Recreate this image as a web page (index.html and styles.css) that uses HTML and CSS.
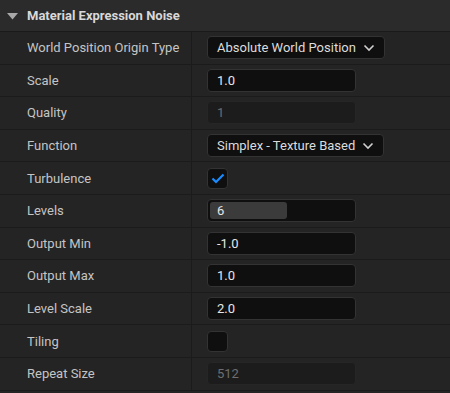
FILE: index.html
```html
<!DOCTYPE html>
<html lang="en">
<head>
  <meta charset="UTF-8">
  <title>Material Expression Noise</title>
  <link rel="stylesheet" href="styles.css">
</head>
<body>

  <div class="panel">
    <div class="header">
      <svg class="arrow" width="11" height="7" viewBox="0 0 11 7"><path d="M0 0 H11 L5.5 6.5 Z" fill="#a8a8a8"/></svg>
      <span>Material Expression Noise</span>
    </div>

    <div class="row">
      <div class="name">World Position Origin Type</div>
      <div class="value">
        <div class="combo">Absolute World Position
          <svg width="12" height="8" viewBox="0 0 12 8"><path d="M1.5 1.5 L6 6 L10.5 1.5" fill="none" stroke="#d0d0d0" stroke-width="1.6"/></svg>
        </div>
      </div>
    </div>

    <div class="row">
      <div class="name">Scale</div>
      <div class="value"><div class="field">1.0</div></div>
    </div>

    <div class="row">
      <div class="name">Quality</div>
      <div class="value"><div class="field disabled">1</div></div>
    </div>

    <div class="row">
      <div class="name">Function</div>
      <div class="value">
        <div class="combo">Simplex - Texture Based
          <svg width="12" height="8" viewBox="0 0 12 8"><path d="M1.5 1.5 L6 6 L10.5 1.5" fill="none" stroke="#d0d0d0" stroke-width="1.6"/></svg>
        </div>
      </div>
    </div>

    <div class="row">
      <div class="name">Turbulence</div>
      <div class="value">
        <div class="check">
          <svg width="14" height="11" viewBox="0 0 14 11"><path d="M1.5 5.5 L5 9 L12.5 1.5" fill="none" stroke="#1a8cff" stroke-width="2.2"/></svg>
        </div>
      </div>
    </div>

    <div class="row">
      <div class="name">Levels</div>
      <div class="value">
        <div class="field slider">
          <div class="fill" style="width: 53%">6</div>
        </div>
      </div>
    </div>

    <div class="row">
      <div class="name">Output Min</div>
      <div class="value"><div class="field">-1.0</div></div>
    </div>

    <div class="row">
      <div class="name">Output Max</div>
      <div class="value"><div class="field">1.0</div></div>
    </div>

    <div class="row">
      <div class="name">Level Scale</div>
      <div class="value"><div class="field">2.0</div></div>
    </div>

    <div class="row">
      <div class="name">Tiling</div>
      <div class="value"><div class="check"></div></div>
    </div>

    <div class="row">
      <div class="name">Repeat Size</div>
      <div class="value"><div class="field disabled">512</div></div>
    </div>
  </div>

</body>
</html>
```

FILE: styles.css
```css
body {
  margin: 0;
  background: #242424;
  font-family: Roboto, "Liberation Sans", sans-serif;
  font-size: 13px;
  color: #c4c4c4;
}
.panel {
  width: 450px;
}
.header {
  height: 31px;
  background: #2b2b2b;
  border-bottom: 1px solid #1a1a1a;
  display: flex;
  align-items: center;
  padding-left: 7px;
  gap: 9px;
  font-weight: bold;
  color: #d8d8d8;
  font-size: 13px;
}
.arrow {
  margin-top: 1px;
}
.row {
  height: 31.6px;
  display: flex;
  border-bottom: 1px solid #1b1b1b;
}
.name {
  width: 164px;
  padding-left: 27px;
  display: flex;
  align-items: center;
  border-right: 1px solid #1b1b1b;
}
.value {
  flex: 1;
  display: flex;
  align-items: center;
  padding-left: 15px;
}
.field {
  width: 138px;
  height: 21px;
  background: #0f0f0f;
  border: 1px solid #333;
  border-radius: 4px;
  display: flex;
  align-items: center;
  padding-left: 9px;
  color: #e6e6e6;
}
.field.disabled {
  background: #1c1c1c;
  border-color: #262626;
  color: #6e6e6e;
}
.slider {
  padding-left: 2px;
  width: 145px;
}
.fill {
  height: 17px;
  background: #3b3b3b;
  border-radius: 3px;
  display: flex;
  align-items: center;
  padding-left: 7px;
  box-sizing: border-box;
}
.combo {
  height: 21px;
  background: #0f0f0f;
  border: 1px solid #333;
  border-radius: 4px;
  display: flex;
  align-items: center;
  gap: 7px;
  padding: 0 9px;
  color: #dcdcdc;
}
.check {
  width: 19px;
  height: 19px;
  background: #0f0f0f;
  border: 1px solid #333;
  border-radius: 4px;
  display: flex;
  align-items: center;
  justify-content: center;
}
```
